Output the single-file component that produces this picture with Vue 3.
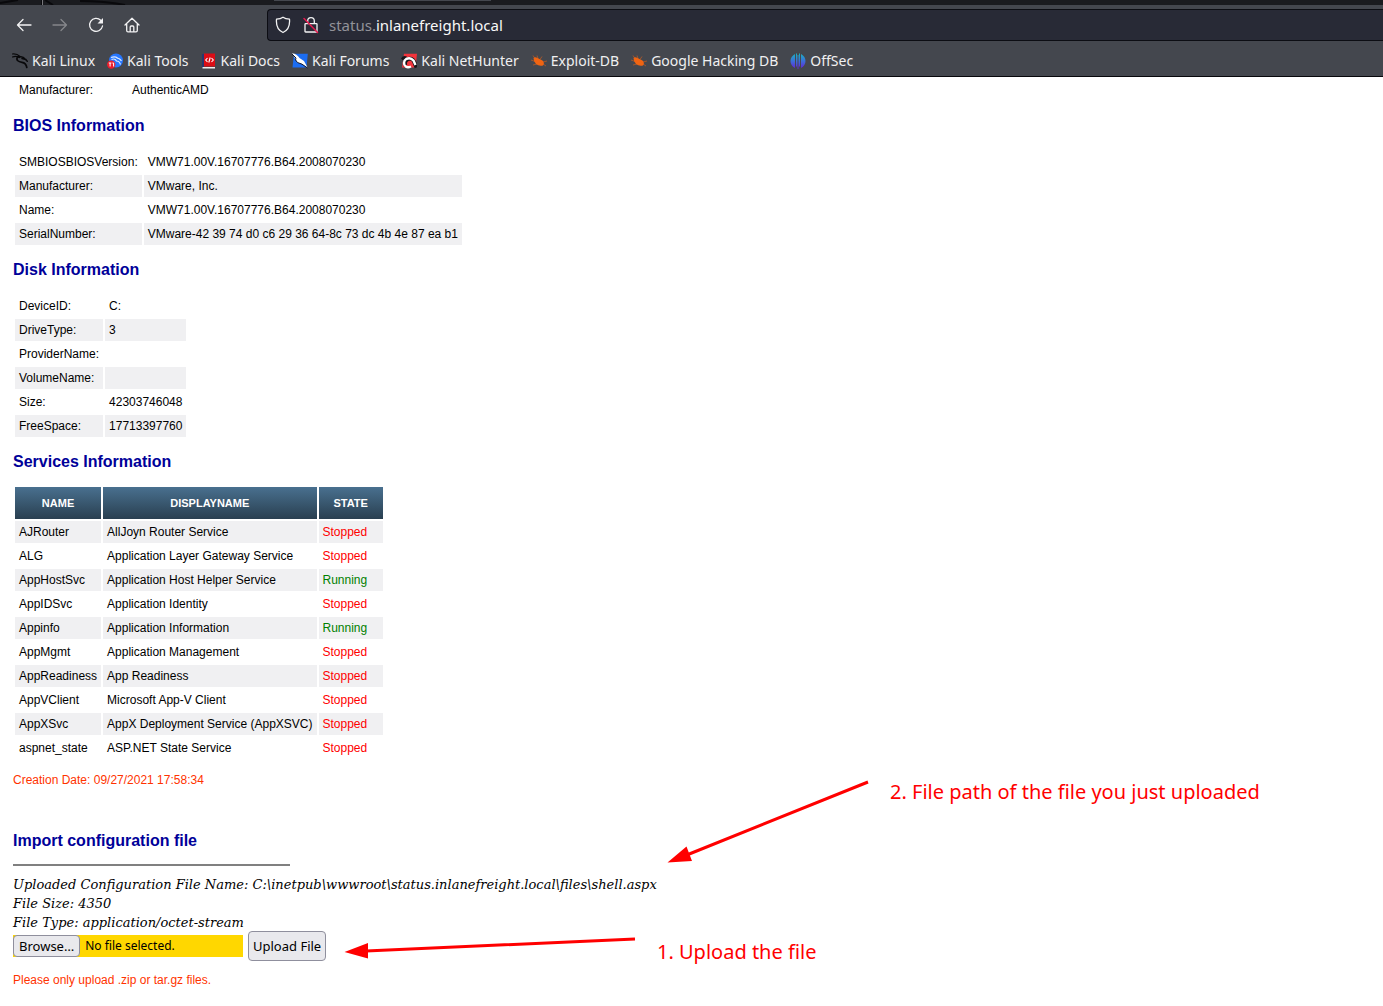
<script setup>
import { ref } from 'vue'

const cpu = [['Manufacturer:', 'AuthenticAMD']]
const bios = [
  ['SMBIOSBIOSVersion:', 'VMW71.00V.16707776.B64.2008070230'],
  ['Manufacturer:', 'VMware, Inc.'],
  ['Name:', 'VMW71.00V.16707776.B64.2008070230'],
  ['SerialNumber:', 'VMware-42 39 74 d0 c6 29 36 64-8c 73 dc 4b 4e 87 ea b1']
]
const disk = [
  ['DeviceID:', 'C:'],
  ['DriveType:', '3'],
  ['ProviderName:', ''],
  ['VolumeName:', ''],
  ['Size:', '42303746048'],
  ['FreeSpace:', '17713397760']
]
const services = [
  ['AJRouter', 'AllJoyn Router Service', 'Stopped'],
  ['ALG', 'Application Layer Gateway Service', 'Stopped'],
  ['AppHostSvc', 'Application Host Helper Service', 'Running'],
  ['AppIDSvc', 'Application Identity', 'Stopped'],
  ['Appinfo', 'Application Information', 'Running'],
  ['AppMgmt', 'Application Management', 'Stopped'],
  ['AppReadiness', 'App Readiness', 'Stopped'],
  ['AppVClient', 'Microsoft App-V Client', 'Stopped'],
  ['AppXSvc', 'AppX Deployment Service (AppXSVC)', 'Stopped'],
  ['aspnet_state', 'ASP.NET State Service', 'Stopped']
]
const bookmarks = [
  { icon: 'kali', label: 'Kali Linux' },
  { icon: 'tools', label: 'Kali Tools' },
  { icon: 'docs', label: 'Kali Docs' },
  { icon: 'forums', label: 'Kali Forums' },
  { icon: 'nethunter', label: 'Kali NetHunter' },
  { icon: 'exploit', label: 'Exploit-DB' },
  { icon: 'exploit', label: 'Google Hacking DB' },
  { icon: 'offsec', label: 'OffSec' }
]

const picker = ref(null)
const fileName = ref('No file selected.')
function picked(e) {
  fileName.value = e.target.files[0]?.name ?? 'No file selected.'
}
</script>

<template>
  <header class="browser">
    <div class="tabstrip">
      <svg width="150" height="5" fill="none"><path d="M0 3 L18 0M42 0v5M45 0l8 5M80 1q25 0 45 4" stroke="#09090c" stroke-width="2" /><path d="M42.500 0v5" stroke="#77777b" /></svg>
      <span class="tab-edge"></span>
    </div>
    <nav class="toolbar">
      <div class="nav-buttons">
        <button type="button" aria-label="Back">
          <svg width="16" height="16" viewBox="0 0 16 16"><path d="M15 8H1.500M7 2.500L1.500 8L7 13.500" /></svg>
        </button>
        <button type="button" aria-label="Forward" disabled>
          <svg width="16" height="16" viewBox="0 0 16 16"><path d="M1 8h13.500M9 2.500L14.500 8L9 13.500" /></svg>
        </button>
        <button type="button" aria-label="Reload">
          <svg width="16" height="16" viewBox="0 0 16 16"><path d="M12.700 3.300A6.500 6.500 0 1 0 14.500 9" /><path d="M15 1v5.500H9.500z" class="solid" /></svg>
        </button>
        <button type="button" aria-label="Home">
          <svg width="16" height="16" viewBox="0 0 16 16"><path d="M1 8L8 1.200L15 8M2.700 7v6.500q0 1.300 1.300 1.300h8q1.300 0 1.300-1.300V7M6.200 14.500V10q0-1 1-1h1.600q1 0 1 1v4.500" /></svg>
        </button>
      </div>
      <div class="address">
        <svg width="16" height="18" viewBox="0 0 16 18"><path d="M8 1.200C6 2.600 4 3 1.500 3.200C1 9 2.500 14 8 16.500C13.500 14 15 9 14.500 3.200C12 3 10 2.600 8 1.200z" /></svg>
        <svg width="16" height="18" viewBox="0 0 16 18"><path d="M4.700 7.500V5a3.300 3.300 0 0 1 6.600 0v2.500M2.600 7.700h10.800q.6 0 .6.600v7.100q0 .6-.6.600H2.600q-.6 0-.6-.6V8.300q0-.6.600-.6z" /><path d="M1 2.500L14.500 16.500" class="slash" /></svg>
        <div class="url" role="textbox" aria-label="Address" tabindex="0">status.<b>inlanefreight.local</b></div>
      </div>
    </nav>
    <nav class="bookmarks">
      <a v-for="b in bookmarks" :key="b.label" href="#">
        <svg width="16" height="16" viewBox="0 0 16 16">
          <g v-if="b.icon === 'kali'" fill="none" stroke="#08080a" stroke-linecap="round">
            <path d="M.5 1Q5 .5 8 3.500M.5 4Q4 2.500 7.500 4.500" stroke-width="1.200" />
            <path d="M6.500 3.500Q4 5 5.500 7.500Q7 9 10 9.300Q14 9.800 14.800 14.500" stroke-width="1.700" />
            <path d="M7 4Q11 3 13 6L15.300 8.200M10 5.500l4 1" stroke-width="1.500" />
          </g>
          <g v-else-if="b.icon === 'tools'">
            <circle cx="9" cy="7.500" r="7" fill="#2777ff" />
            <path d="M4 4.500q4-1.500 6.500.5M4.500 6.500Q8 5 9.500 8q3 0 4 3.500M9.500 5q3 0 5 3" fill="none" stroke="#dbe9ff" stroke-width="1.200" />
            <circle cx="4.200" cy="11.600" r="4.200" fill="#eb1d2c" />
            <path d="M1.800 10h2.600M3.100 10v3.500M5.400 10h1.200v3.500" fill="none" stroke="#fff" stroke-width="1" />
          </g>
          <g v-else-if="b.icon === 'docs'">
            <path d="M1 1h2v14H1z" fill="#28376f" /><path d="M3 .5h11v13H3z" fill="#dc0d16" /><path d="M1.500 14h12.500v1.500H1.500z" fill="#eee" />
            <path d="M6.500 5L4.700 7l1.800 2M10.500 5l1.800 2-1.800 2M9.200 4.500L7.800 9.500" fill="none" stroke="#fff" stroke-width="1.100" />
          </g>
          <g v-else-if="b.icon === 'forums'">
            <path d="M2 .8h13.800L14.500 14.500H.5z" fill="#1c6df2" />
            <path d="M0 .3Q5 1 7.500 5L12 8L15.500 14.500L10 11L5.500 9.500L3.500 6z" fill="#fff" />
            <path d="M0 1L4 5L3.500 7l2 2.500L10 11.200l5.500 3.800" fill="none" stroke="#151b2c" stroke-width="1" />
          </g>
          <g v-else-if="b.icon === 'nethunter'">
            <path d="M3 .8h13L14.500 14.500H1z" fill="#f3343c" />
            <path d="M0 5.500Q2 2 6 3.500L2.500 8z" fill="#17171b" />
            <path d="M4.500 12.500A4.700 4.700 0 1 1 13 8.500L15.500 14.500" fill="none" stroke="#17171b" stroke-width="4" />
            <path d="M10 13.500Q5.500 15.500 3.500 12Q2 8 5.500 5.800Q9.500 4 12.500 7.500L14.500 12" fill="none" stroke="#fff" stroke-width="2.400" />
          </g>
          <g v-else-if="b.icon === 'exploit'" fill="#f06412" stroke="#f06412">
            <path d="M2.500 5Q4 3.500 6.500 5L11.500 7.500Q14 10 12 12.500Q8 13.500 5 11Q2.500 8.500 2.500 5z" stroke="none" />
            <path d="M4 5.500L2 2.500M7 5.500L6 2.500M9 6.500l2-3M12 9l4-1M12 11l3 2M6 11l-4 1M4 8.500L0 7" fill="none" stroke-width=".7" opacity=".75" />
          </g>
          <g v-else>
            <defs><linearGradient id="offsec" gradientUnits="userSpaceOnUse" x1="0" y1="0" x2="0" y2="16"><stop stop-color="#16b8c0" /><stop offset=".5" stop-color="#3b6fd8" /><stop offset="1" stop-color="#6620d5" /></linearGradient></defs>
            <path d="M5 1v14Q.5 12.500.5 8T5 1zM11 1v14Q15.500 12.500 15.500 8T11 1zM6 .5h1v13H6zM9 .5h1v13H9zM7.500 2h1v14h-1z" fill="url(#offsec)" />
          </g>
        </svg>
        <span>{{ b.label }}</span>
      </a>
    </nav>
  </header>

  <main class="page">
    <table class="facts cpu">
      <tbody><tr v-for="r in cpu" :key="r[0]"><td>{{ r[0] }}</td><td>{{ r[1] }}</td></tr></tbody>
    </table>

    <h2>BIOS Information</h2>
    <table class="facts">
      <tbody><tr v-for="r in bios" :key="r[0]"><td>{{ r[0] }}</td><td>{{ r[1] }}</td></tr></tbody>
    </table>

    <h2>Disk Information</h2>
    <table class="facts">
      <tbody><tr v-for="r in disk" :key="r[0]"><td>{{ r[0] }}</td><td>{{ r[1] }}</td></tr></tbody>
    </table>

    <h2>Services Information</h2>
    <table class="services">
      <thead><tr><th>NAME</th><th>DISPLAYNAME</th><th>STATE</th></tr></thead>
      <tbody>
        <tr v-for="s in services" :key="s[0]">
          <td>{{ s[0] }}</td><td>{{ s[1] }}</td><td :class="s[2].toLowerCase()">{{ s[2] }}</td>
        </tr>
      </tbody>
    </table>

    <p class="note">Creation Date: 09/27/2021 17:58:34</p>

    <section class="import">
      <h2>Import configuration file</h2>
      <hr>
      <p class="result">
        Uploaded Configuration File Name: C:\inetpub\wwwroot\status.inlanefreight.local\files\shell.aspx<br>
        File Size: 4350<br>
        File Type: application/octet-stream
      </p>
      <form class="upload" @submit.prevent>
        <div class="picker">
          <button type="button" @click="picker.click()">Browse…</button>
          <label for="config-file">{{ fileName }}</label>
          <input id="config-file" ref="picker" type="file" hidden @change="picked">
        </div>
        <button type="submit" class="send">Upload File</button>
      </form>
      <p class="note">Please only upload .zip or tar.gz files.</p>

      <div class="annotations">
        <svg width="530" height="190" viewBox="340 775 530 190" fill="red" stroke="red">
          <path d="M868 782L688 854.500M635 939L366 951" stroke-width="3" />
          <path d="M667.500 862.500L686.500 846.500L692 861zM344.500 952L368 943V958.500z" stroke="none" />
        </svg>
        <p class="step path-step">2. File path of the file you just uploaded</p>
        <p class="step upload-step">1. Upload the file</p>
      </div>
    </section>
  </main>
</template>

<style>
body {
  margin: 0;
  background: #fff;
}
</style>

<style scoped>
.browser {
  background: #44474e;
  border-bottom: 1px solid #08080c;
  font-family: "Noto Sans", sans-serif;
  color: #f0f0f1;
}
.tabstrip {
  display: flex;
  height: 5px;
  background: #1a1b1f;
}
.tabstrip svg {
  flex: none;
}
.tab-edge {
  width: 217px;
  height: 1px;
  margin-left: 124px;
  background: #44474e;
}
.toolbar {
  display: flex;
  padding-top: 4px;
}
.nav-buttons {
  display: flex;
  align-items: center;
  gap: 20px;
  flex: none;
  width: 251px;
  padding-left: 16px;
}
.nav-buttons button {
  padding: 0;
  border: 0;
  background: none;
  display: flex;
}
.nav-buttons svg,
.address svg {
  fill: none;
  stroke: #f2f2f3;
  stroke-width: 1.3;
  stroke-linecap: round;
  stroke-linejoin: round;
}
.nav-buttons button:disabled svg {
  stroke: #85878b;
}
.nav-buttons .solid {
  fill: #f2f2f3;
  stroke: none;
}
.address {
  flex: 1;
  display: flex;
  align-items: center;
  height: 30px;
  padding-left: 7px;
  gap: 12px;
  border: 1px solid #0c0d13;
  border-right: 0;
  border-radius: 4px 0 0 4px;
  background: #282a36;
}
.address .slash {
  stroke: #e2184c;
  stroke-width: 1.5;
}
.url {
  margin-left: -2px;
  font-size: 15px;
  line-height: 20px;
  color: #929299;
  outline: 0;
}
.url b {
  font-weight: 400;
  color: #f8f8f8;
}
.bookmarks {
  display: flex;
  align-items: center;
  gap: 12px;
  padding: 10px 12px 5px;
}
.bookmarks a {
  display: flex;
  align-items: center;
  gap: 4px;
  font-size: 14px;
  line-height: 20px;
  color: inherit;
  text-decoration: none;
  white-space: nowrap;
}
.page {
  padding: 0 13px 18px;
  font-family: "Liberation Sans", Arial, sans-serif;
  font-size: 12px;
  line-height: 14px;
  color: #000;
}
h2 {
  margin: 14px 0;
  font-size: 16px;
  line-height: 18px;
  color: #000099;
}
table {
  border-spacing: 2px;
}
td {
  height: 14px;
  padding: 4px;
  background: var(--stripe, transparent);
}
.cpu td:first-child {
  width: 103px;
}
.facts tr:nth-child(even),
.services tbody tr:nth-child(odd) {
  --stripe: #f0f0f2;
}
th {
  padding: 9px 15px;
  font-size: 11px;
  color: #fff;
  background: linear-gradient(#49708f, #293f50);
}
.stopped {
  color: #ff0000;
}
.running {
  color: #008000;
}
.note {
  margin: 12px 0;
  color: #ff3300;
}
.import {
  position: relative;
  margin-top: 45px;
}
hr {
  width: 277px;
  height: 2px;
  margin: 0;
  border: 0;
  background: #808080;
}
.result {
  margin: 9px 0 0;
  font: italic 13px/19px "DejaVu Serif", serif;
}
.upload {
  display: flex;
  align-items: center;
  gap: 5px;
  margin-top: -1px;
}
.upload button {
  border: 1px solid #8f8f9d;
  border-radius: 4px;
  background: #e9e9ed;
  font: 13px/20px "Noto Sans", sans-serif;
  color: #000;
}
.picker {
  display: flex;
  align-items: center;
  gap: 5px;
  width: 230px;
  background: #ffd700;
  font: 12px/20px "Noto Sans", sans-serif;
}
.picker button {
  padding: 0 5px;
}
.upload .send {
  padding: 4px;
}
.annotations svg {
  position: absolute;
  left: 327px;
  top: -57px;
}
.step {
  position: absolute;
  margin: 0;
  font: 20px/28px "Noto Sans", sans-serif;
  color: red;
  white-space: nowrap;
}
.path-step {
  left: 877px;
  top: -54px;
}
.upload-step {
  left: 644px;
  top: 106px;
}
</style>
